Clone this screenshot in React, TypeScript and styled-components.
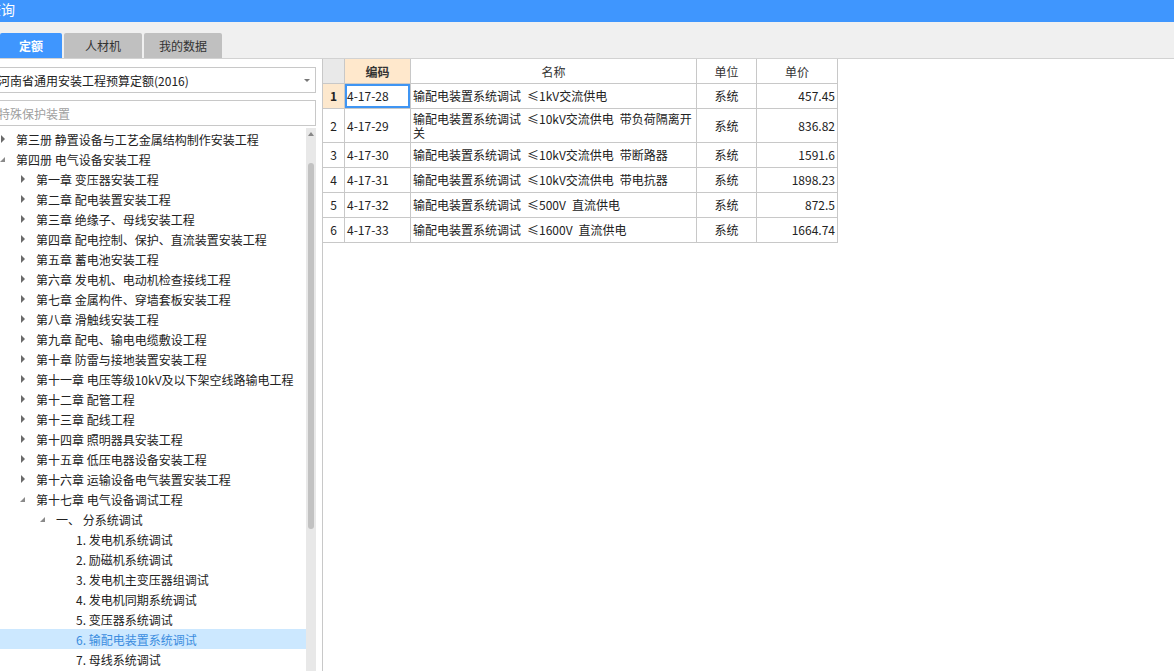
import styled, { createGlobalStyle } from "styled-components";

const GlobalStyle = createGlobalStyle`
  html, body {
    margin: 0;
    padding: 0;
    background: #ffffff;
    overflow: hidden;
  }
  body {
    font-family: "Noto Sans CJK SC", "Noto Sans", sans-serif;
    font-size: 12px;
    color: #222;
  }
`;

const Page = styled.div`
  width: 1174px;
  height: 671px;
  display: flex;
  flex-direction: column;
  overflow: hidden;
  background: #fff;
`;

const TitleBar = styled.div`
  height: 22px;
  background: #3f96fe;
  color: #fff;
  font-size: 14px;
  line-height: 19px;
  overflow: hidden;
  flex-shrink: 0;
`;

const Title = styled.span`
  display: inline-block;
  margin-left: -13px;
`;

const TabStrip = styled.div`
  height: 36px;
  background: #f0f0f0;
  border-bottom: 1px solid #d2d2d2;
  display: flex;
  align-items: flex-end;
  gap: 2px;
  flex-shrink: 0;
`;

const Tab = styled.div<{ $active?: boolean; $width: number }>`
  width: ${({ $width }) => $width}px;
  height: 25px;
  border-radius: 2px 2px 0 0;
  background: ${({ $active }) => ($active ? "#3f96fe" : "#c0c0c0")};
  color: ${({ $active }) => ($active ? "#fff" : "#333")};
  font-weight: ${({ $active }) => ($active ? 700 : 400)};
  font-size: 12px;
  display: flex;
  align-items: center;
  justify-content: center;
`;

const Body = styled.div`
  flex: 1;
  display: flex;
  min-height: 0;
`;

const LeftPanel = styled.div`
  width: 322px;
  border-right: 1px solid #c8c8c8;
  display: flex;
  flex-direction: column;
  flex-shrink: 0;
  min-height: 0;
`;

const Field = styled.div<{ $top: number }>`
  box-sizing: border-box;
  height: 26px;
  margin: ${({ $top }) => $top}px 6px 0 -6px;
  border: 1px solid #c8c8c8;
  background: #fff;
  display: flex;
  align-items: center;
  padding-left: 3px;
  position: relative;
  flex-shrink: 0;
`;

const FieldText = styled.span<{ $muted?: boolean }>`
  color: ${({ $muted }) => ($muted ? "#a0a0a0" : "#222")};
  white-space: nowrap;
`;

const Caret = styled.span`
  position: absolute;
  right: 5px;
  top: 11px;
  width: 0;
  height: 0;
  border-left: 3px solid transparent;
  border-right: 3px solid transparent;
  border-top: 3px solid #777;
`;

const TreeArea = styled.div`
  flex: 1;
  display: flex;
  margin: 2px 6px 0 0;
  min-height: 0;
  overflow: hidden;
`;

const TreeList = styled.div`
  flex: 1;
  padding-top: 1px;
`;

const TreeRow = styled.div<{ $level: number; $selected?: boolean }>`
  height: 20px;
  display: flex;
  align-items: center;
  padding-left: ${({ $level }) => $level * 20}px;
  background: ${({ $selected }) => ($selected ? "#cce8ff" : "transparent")};
  color: ${({ $selected }) => ($selected ? "#3b8de0" : "#222")};
  white-space: nowrap;
`;

const Toggle = styled.span`
  width: 16px;
  height: 20px;
  flex-shrink: 0;
  position: relative;
`;

const Collapsed = styled.span`
  position: absolute;
  left: 1px;
  top: 6px;
  width: 0;
  height: 0;
  border-top: 4px solid transparent;
  border-bottom: 4px solid transparent;
  border-left: 4px solid #6a6a6a;
`;

const Expanded = styled.span`
  position: absolute;
  left: 0;
  top: 8px;
  width: 0;
  height: 0;
  border-left: 5px solid transparent;
  border-bottom: 5px solid #8a8a8a;
`;

const Scrollbar = styled.div`
  width: 10px;
  background: #e8e8e8;
  display: flex;
  flex-direction: column;
  align-items: center;
  flex-shrink: 0;
`;

const UpArrow = styled.span`
  margin-top: 4px;
  width: 0;
  height: 0;
  border-left: 3px solid transparent;
  border-right: 3px solid transparent;
  border-bottom: 4px solid #888;
`;

const Thumb = styled.div`
  margin-top: 27px;
  width: 6px;
  height: 366px;
  border-radius: 3px;
  background: #c2c2c2;
`;

const RightPanel = styled.div`
  flex: 1;
  background: #fff;
`;

const Grid = styled.table`
  border-collapse: separate;
  border-spacing: 0;
  table-layout: fixed;
  width: 515px;
  font-size: 12px;
  color: #222;
`;

const HeadCell = styled.th<{ $bg?: string; $bold?: boolean }>`
  height: 24px;
  padding: 0;
  border-right: 1px solid #c8c8c8;
  border-bottom: 1px solid #c8c8c8;
  background: ${({ $bg }) => $bg ?? "#fff"};
  font-weight: ${({ $bold }) => ($bold ? 700 : 400)};
  text-align: center;
  color: #333;
`;

const Cell = styled.td<{
  $align?: "left" | "center" | "right";
  $bg?: string;
  $bold?: boolean;
  $focused?: boolean;
  $tall?: boolean;
}>`
  height: ${({ $tall }) => ($tall ? 33 : 24)}px;
  padding: 0 2px;
  border-right: 1px solid #c8c8c8;
  border-bottom: 1px solid #c8c8c8;
  background: ${({ $bg }) => $bg ?? "#fff"};
  text-align: ${({ $align }) => $align ?? "left"};
  font-weight: ${({ $bold }) => ($bold ? 700 : 400)};
  line-height: 14px;
  vertical-align: middle;
  white-space: pre;
  overflow: hidden;
  box-shadow: ${({ $focused }) => ($focused ? "inset 0 0 0 2px #3f95f3" : "none")};
`;

type Node = { level: number; text: string; state?: "open" | "closed"; selected?: boolean };

const chapters = [
  "第一章 变压器安装工程",
  "第二章 配电装置安装工程",
  "第三章 绝缘子、母线安装工程",
  "第四章 配电控制、保护、直流装置安装工程",
  "第五章 蓄电池安装工程",
  "第六章 发电机、电动机检查接线工程",
  "第七章 金属构件、穿墙套板安装工程",
  "第八章 滑触线安装工程",
  "第九章 配电、输电电缆敷设工程",
  "第十章 防雷与接地装置安装工程",
  "第十一章 电压等级10kV及以下架空线路输电工程",
  "第十二章 配管工程",
  "第十三章 配线工程",
  "第十四章 照明器具安装工程",
  "第十五章 低压电器设备安装工程",
  "第十六章 运输设备电气装置安装工程",
];

const items = [
  "1. 发电机系统调试",
  "2. 励磁机系统调试",
  "3. 发电机主变压器组调试",
  "4. 发电机同期系统调试",
  "5. 变压器系统调试",
  "6. 输配电装置系统调试",
  "7. 母线系统调试",
];

const tree: Node[] = [
  { level: 0, text: "第三册 静置设备与工艺金属结构制作安装工程", state: "closed" },
  { level: 0, text: "第四册 电气设备安装工程", state: "open" },
  ...chapters.map((text) => ({ level: 1, text, state: "closed" as const })),
  { level: 1, text: "第十七章 电气设备调试工程", state: "open" },
  { level: 2, text: "一、 分系统调试", state: "open" },
  ...items.map((text, i) => ({ level: 3, text, selected: i === 5 })),
];

// en spaces stand in for the wide gaps of the original grid font
const gap = "\u2002";

const rows = [
  { code: "4-17-28", name: `输配电装置系统调试${gap}≤1kV交流供电`, unit: "系统", price: "457.45" },
  { code: "4-17-29", name: `输配电装置系统调试${gap}≤10kV交流供电${gap}带负荷隔离开\n关`, unit: "系统", price: "836.82" },
  { code: "4-17-30", name: `输配电装置系统调试${gap}≤10kV交流供电${gap}带断路器`, unit: "系统", price: "1591.6" },
  { code: "4-17-31", name: `输配电装置系统调试${gap}≤10kV交流供电${gap}带电抗器`, unit: "系统", price: "1898.23" },
  { code: "4-17-32", name: `输配电装置系统调试${gap}≤500V${gap}直流供电`, unit: "系统", price: "872.5" },
  { code: "4-17-33", name: `输配电装置系统调试${gap}≤1600V${gap}直流供电`, unit: "系统", price: "1664.74" },
];

export default function App() {
  return (
    <Page>
      <GlobalStyle />
      <TitleBar>
        <Title>查询</Title>
      </TitleBar>
      <TabStrip>
        <Tab $active $width={62}>定额</Tab>
        <Tab $width={78}>人材机</Tab>
        <Tab $width={78}>我的数据</Tab>
      </TabStrip>
      <Body>
        <LeftPanel>
          <Field $top={8}>
            <FieldText>河南省通用安装工程预算定额(2016)</FieldText>
            <Caret />
          </Field>
          <Field $top={7}>
            <FieldText $muted>特殊保护装置</FieldText>
          </Field>
          <TreeArea>
            <TreeList>
              {tree.map((n, i) => (
                <TreeRow key={i} $level={n.level} $selected={n.selected}>
                  <Toggle>
                    {n.state === "closed" && <Collapsed />}
                    {n.state === "open" && <Expanded />}
                  </Toggle>
                  {n.text}
                </TreeRow>
              ))}
            </TreeList>
            <Scrollbar>
              <UpArrow />
              <Thumb />
            </Scrollbar>
          </TreeArea>
        </LeftPanel>
        <RightPanel>
          <Grid>
            <colgroup>
              <col style={{ width: 22 }} />
              <col style={{ width: 66 }} />
              <col style={{ width: 286 }} />
              <col style={{ width: 60 }} />
              <col style={{ width: 81 }} />
            </colgroup>
            <thead>
              <tr>
                <HeadCell $bg="#e9e9e9" />
                <HeadCell $bg="#ffe8cc" $bold>编码</HeadCell>
                <HeadCell>名称</HeadCell>
                <HeadCell>单位</HeadCell>
                <HeadCell>单价</HeadCell>
              </tr>
            </thead>
            <tbody>
              {rows.map((r, i) => (
                <tr key={r.code}>
                  <Cell
                    $align="center"
                    $bg={i === 0 ? "#fde8cd" : undefined}
                    $bold={i === 0}
                    $tall={i === 1}
                  >
                    {i + 1}
                  </Cell>
                  <Cell $focused={i === 0} $tall={i === 1}>{r.code}</Cell>
                  <Cell $tall={i === 1}>{r.name}</Cell>
                  <Cell $align="center" $tall={i === 1}>{r.unit}</Cell>
                  <Cell $align="right" $tall={i === 1}>{r.price}</Cell>
                </tr>
              ))}
            </tbody>
          </Grid>
        </RightPanel>
      </Body>
    </Page>
  );
}
